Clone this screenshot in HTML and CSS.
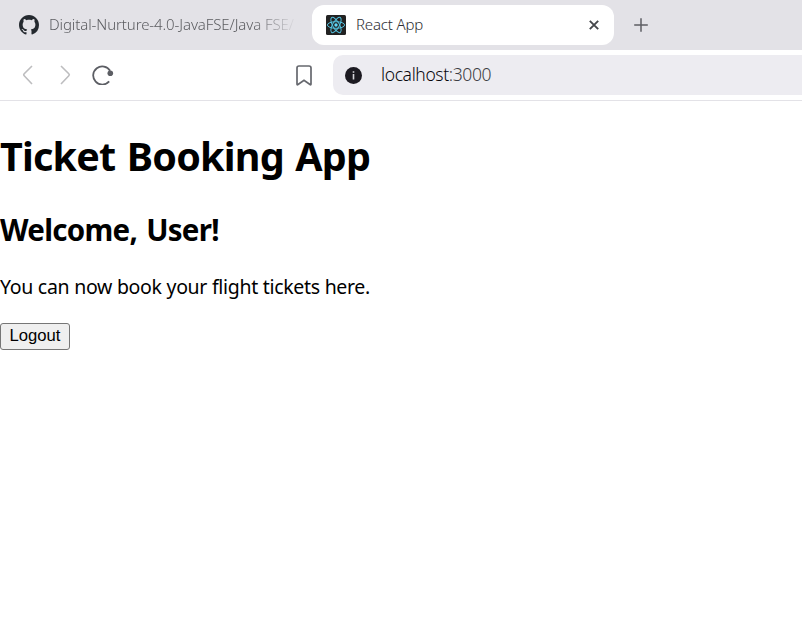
FILE: index.html
```html
<!DOCTYPE html>
<html lang="en">
<head>
<meta charset="utf-8">
<title>React App</title>
<link rel="stylesheet" href="styles.css">
</head>
<body>
<header class="tabs">
  <div class="tab">
    <svg class="favicon" viewBox="0 0 16 16" fill="#24292f"><path d="M8 0C3.58 0 0 3.58 0 8c0 3.54 2.29 6.53 5.47 7.59.4.07.55-.17.55-.38 0-.19-.01-.82-.01-1.49-2.01.37-2.53-.49-2.69-.94-.09-.23-.48-.94-.82-1.13-.28-.15-.68-.52-.01-.53.63-.01 1.08.58 1.23.82.72 1.21 1.87.87 2.33.66.07-.52.28-.87.51-1.07-1.78-.2-3.64-.89-3.64-3.95 0-.87.31-1.59.82-2.15-.08-.2-.36-1.02.08-2.12 0 0 .67-.21 2.2.82.64-.18 1.32-.27 2-.27s1.36.09 2 .27c1.53-1.04 2.2-.82 2.2-.82.44 1.1.16 1.92.08 2.12.51.56.82 1.27.82 2.15 0 3.07-1.87 3.75-3.65 3.95.29.25.54.73.54 1.48 0 1.07-.01 1.93-.01 2.2 0 .21.15.46.55.38A8.01 8.01 0 0 0 16 8c0-4.42-3.58-8-8-8z"/></svg>
    <span class="tab-title faded">Digital-Nurture-4.0-JavaFSE/Java FSE/</span>
  </div>
  <div class="tab active">
    <svg class="favicon" viewBox="0 0 20 20"><rect width="20" height="20" rx="1.5" fill="#222"/><g fill="none" stroke="#53c1de" stroke-width="1"><ellipse cx="10" cy="10" rx="8.6" ry="3.3"/><ellipse cx="10" cy="10" rx="8.6" ry="3.3" transform="rotate(60 10 10)"/><ellipse cx="10" cy="10" rx="8.6" ry="3.3" transform="rotate(120 10 10)"/></g><circle cx="10" cy="10" r="1.7" fill="#61dafb"/></svg>
    <span class="tab-title">React App</span>
    <svg class="close" viewBox="0 0 10 10"><path d="M.8.8l8.4 8.4M9.2.8L.8 9.2" stroke="#45474b" stroke-width="1.9"/></svg>
  </div>
  <svg class="plus" viewBox="0 0 14 14"><path d="M7 .2v13.6M.2 7h13.6" stroke="#5d5e63" stroke-width="1.5"/></svg>
</header>
<nav class="toolbar">
  <svg class="chevron" viewBox="0 0 12 20"><path d="M10 1L2.2 8.8q-1 1 0 2L10 19"/></svg>
  <svg class="chevron forward" viewBox="0 0 12 20"><path d="M2 1l7.8 7.8q1 1 0 2L2 19"/></svg>
  <svg class="reload" viewBox="0 0 22 20"><path d="M17.2 16.4A9.1 9.1 0 1 1 18.1 5.8" fill="none" stroke="#5c5e64" stroke-width="1.8"/><circle cx="18.3" cy="8.3" r="2.8" fill="#5c5e64"/></svg>
  <svg class="bookmark" viewBox="0 0 16 21"><path d="M1 19V3q0-2 2-2h10q2 0 2 2v16q0 1.3-1 .5L8 15.2 2 19.5q-1 .8-1-.5z" fill="none" stroke="#66686e" stroke-width="1.7"/></svg>
  <div class="address">
    <svg class="info" viewBox="0 0 17 17"><circle cx="8.5" cy="8.5" r="8.5" fill="#1c1a21"/><path d="M8.5 7v5.5M8.5 4.2v1.6" stroke="#d6d5da" stroke-width="1.6"/></svg>
    <span class="url">localhost<span class="port">:3000</span></span>
  </div>
</nav>
<main>
  <h1>Ticket Booking App</h1>
  <h2>Welcome, User!</h2>
  <p>You can now book your flight tickets here.</p>
  <button>Logout</button>
</main>
</body>
</html>
```
FILE: styles.css
```css
* { box-sizing: border-box; }
body { margin: 0; background: #fff; color: #000; font-family: "Noto Sans", sans-serif; overflow: hidden; }
svg { display: block; flex: none; }
.tabs { height: 50px; display: flex; align-items: center; background: #e3e2e7; }
.tab { width: 312px; height: 40px; padding: 0 15px 0 19px; display: flex; align-items: center; gap: 10px; flex: none; }
.tab.active { width: 302px; padding: 0 15px 0 14px; background: #fff; border-radius: 12px; }
.favicon { width: 20px; height: 20px; }
.tab-title { margin-top: -2px; font-size: 15px; font-weight: 300; line-height: 20px; color: #2c2e32; white-space: nowrap; letter-spacing: -0.15px; }
.faded { flex: 1; letter-spacing: -0.1px; color: #5c5d61; mask-image: linear-gradient(to right, #000 82%, transparent); }
.close { width: 10px; height: 10px; margin-left: auto; }
.plus { width: 14px; height: 14px; margin-left: 20px; }
.toolbar { height: 51px; display: flex; align-items: center; border-bottom: 1px solid #e3e2e7; padding-left: 22px; }
.chevron { width: 12px; height: 20px; fill: none; stroke: #bdbdbf; stroke-width: 1.6; }
.forward { margin-left: 25px; }
.reload { width: 22px; height: 20px; margin-left: 21px; }
.bookmark { width: 16px; height: 21px; margin-left: 181.5px; }
.address { flex: 1; height: 40px; margin-left: 21.5px; padding-left: 11.5px; display: flex; align-items: center; gap: 19.5px; background: #edecf1; border-radius: 10px 0 0 10px; }
.info { width: 17px; height: 17px; margin-top: 1px; }
.url { margin-top: -2px; font-size: 17.5px; font-weight: 300; line-height: 24px; letter-spacing: -0.37px; color: #08070c; }
.port { color: #3c3d43; }
h1, h2, p { margin: 0; white-space: nowrap; }
h1 { margin-top: 28px; font-size: 39.5px; line-height: 54px; letter-spacing: -0.8px; word-spacing: 2px; }
h2 { margin-top: 27px; font-size: 29.5px; line-height: 40px; letter-spacing: -0.7px; word-spacing: 2px; }
p { margin-top: 23px; font-size: 19.5px; line-height: 28px; letter-spacing: -0.33px; word-spacing: 0.2px; }
button { display: block; width: 70px; height: 27px; margin-top: 22px; padding: 0 0 2px; border: 1px solid #767676; border-radius: 3px; background: #efefef; color: #000; font: 16.67px/23px "Liberation Sans", sans-serif; }
```
